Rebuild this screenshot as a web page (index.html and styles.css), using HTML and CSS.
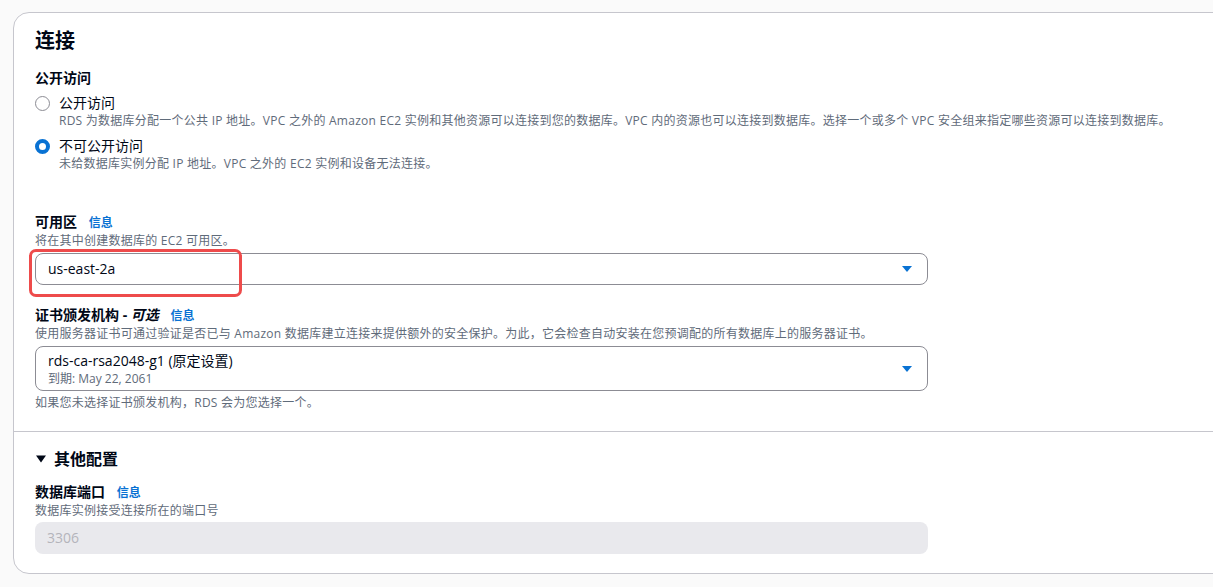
FILE: index.html
```html
<!DOCTYPE html>
<html lang="zh-CN">
<head>
    <meta charset="UTF-8">
    <meta name="viewport" content="width=device-width, initial-scale=1.0">
    <title>连接</title>
    <link rel="stylesheet" href="styles.css">
</head>
<body>
    <div class="card">
        <div class="card-body">
            <h2 class="card-title">连接</h2>

            <div class="field">
                <div class="field-label">公开访问</div>
                <div class="radio-group">
                    <div class="radio">
                        <span class="radio-dot"></span>
                        <div class="radio-text">
                            <div class="radio-label">公开访问</div>
                            <div class="radio-desc">RDS 为数据库分配一个公共 IP 地址。VPC 之外的 Amazon EC2 实例和其他资源可以连接到您的数据库。VPC 内的资源也可以连接到数据库。选择一个或多个 VPC 安全组来指定哪些资源可以连接到数据库。</div>
                        </div>
                    </div>
                    <div class="radio">
                        <span class="radio-dot checked"></span>
                        <div class="radio-text">
                            <div class="radio-label">不可公开访问</div>
                            <div class="radio-desc">未给数据库实例分配 IP 地址。VPC 之外的 EC2 实例和设备无法连接。</div>
                        </div>
                    </div>
                </div>
            </div>

            <div class="field field-spaced">
                <div class="field-label">可用区 <a class="info" href="#">信息</a></div>
                <div class="field-desc">将在其中创建数据库的 EC2 可用区。</div>
                <div class="select highlighted">
                    <span class="select-value">us-east-2a</span>
                    <svg class="caret" width="12" height="8" viewBox="0 0 12 8"><path d="M1 1h10L6 7z" fill="#0972d3"/></svg>
                    <span class="highlight"></span>
                </div>
            </div>

            <div class="field field-ca">
                <div class="field-label">证书颁发机构 - <em>可选</em> <a class="info" href="#">信息</a></div>
                <div class="field-desc">使用服务器证书可通过验证是否已与 Amazon 数据库建立连接来提供额外的安全保护。为此，它会检查自动安装在您预调配的所有数据库上的服务器证书。</div>
                <div class="select select-tall">
                    <div>
                        <div class="select-value">rds-ca-rsa2048-g1 (原定设置)</div>
                        <div class="select-sub">到期: May 22, 2061</div>
                    </div>
                    <svg class="caret" width="12" height="8" viewBox="0 0 12 8"><path d="M1 1h10L6 7z" fill="#0972d3"/></svg>
                </div>
                <div class="field-help">如果您未选择证书颁发机构，RDS 会为您选择一个。</div>
            </div>
        </div>

        <div class="card-section">
            <div class="expander">
                <svg width="12" height="10" viewBox="0 0 12 10"><path d="M1 1.5h10L6 8.5z" fill="#000716"/></svg>
                <span>其他配置</span>
            </div>
            <div class="field field-port">
                <div class="field-label">数据库端口 <a class="info" href="#">信息</a></div>
                <div class="field-desc">数据库实例接受连接所在的端口号</div>
                <div class="input disabled">3306</div>
            </div>
        </div>
    </div>
</body>
</html>
```

FILE: styles.css
```css
html, body {
    overflow: hidden;
}
body {
    margin: 0;
    background-color: #fafafa;
    font-family: "Open Sans", "Noto Sans CJK SC", sans-serif;
    color: #000716;
}
.card {
    margin: 12px 0 0 13px;
    width: 1260px;
    background-color: #fff;
    border: 1px solid #c6c6cd;
    border-radius: 16px;
}
.card-body {
    padding: 16px 20px 20px 21px;
}
.card-title {
    margin: 0;
    font-size: 20px;
    line-height: 24px;
    font-weight: 700;
}
.field {
    width: 893px;
}
.field-label {
    font-size: 14px;
    line-height: 20px;
    font-weight: 700;
}
.field-label em {
    font-style: italic;
}
.info {
    margin-left: 8px;
    font-size: 12px;
    font-weight: 700;
    color: #0972d3;
    text-decoration: none;
}
.field-desc, .field-help, .radio-desc, .select-sub {
    font-size: 12px;
    line-height: 16px;
    letter-spacing: 0.25px;
    color: #5f6b7a;
}
.field-desc {
    margin-bottom: 4px;
}
.field-help {
    margin-top: 4px;
}

/* first section */
.card-title + .field {
    margin-top: 15px;
}
.radio-group {
    margin-top: 5px;
}
.radio {
    display: flex;
    gap: 9px;
    margin-bottom: 7px;
    width: 1160px;
}
.radio-dot {
    flex: none;
    width: 15px;
    height: 15px;
    margin: 3px 0 0 0;
    border: 1.5px solid #8c8c94;
    border-radius: 50%;
    box-sizing: border-box;
    background-color: #fff;
}
.radio-dot.checked {
    border: 4px solid #0972d3;
}
.radio-label {
    font-size: 14px;
    line-height: 20px;
}
.radio-desc {
    white-space: nowrap;
}

.field-spaced {
    margin-top: 40px;
}
.field-ca {
    margin-top: 20px;
}
.field-ca .field-desc {
    white-space: nowrap;
}

/* selects */
.select {
    position: relative;
    display: flex;
    align-items: center;
    justify-content: space-between;
    height: 32px;
    padding: 0 14px 0 12px;
    border: 1px solid #8c8c94;
    border-radius: 8px;
    box-sizing: border-box;
}
.select-tall {
    height: 45px;
}
.select-value {
    font-size: 14px;
    line-height: 20px;
}
.select-sub {
    letter-spacing: 0;
}
.caret {
    flex: none;
}
.highlight {
    position: absolute;
    left: -7px;
    top: -5px;
    width: 213px;
    height: 48px;
    border: 3px solid #ee4b4b;
    border-radius: 7px;
    box-sizing: border-box;
}

/* other settings */
.card-section {
    border-top: 1px solid #c6c6cd;
    padding: 16px 20px 19px 21px;
}
.expander {
    display: flex;
    align-items: center;
    gap: 7px;
    font-size: 16px;
    line-height: 22px;
    font-weight: 700;
}
.field-port {
    margin-top: 12px;
}
.field-port .field-desc {
    margin-bottom: 3px;
}
.input {
    height: 32px;
    padding: 0 12px;
    border-radius: 8px;
    font-size: 14px;
    line-height: 32px;
    box-sizing: border-box;
}
.input.disabled {
    background-color: #e9e9ed;
    color: #b4b4bb;
}
```
